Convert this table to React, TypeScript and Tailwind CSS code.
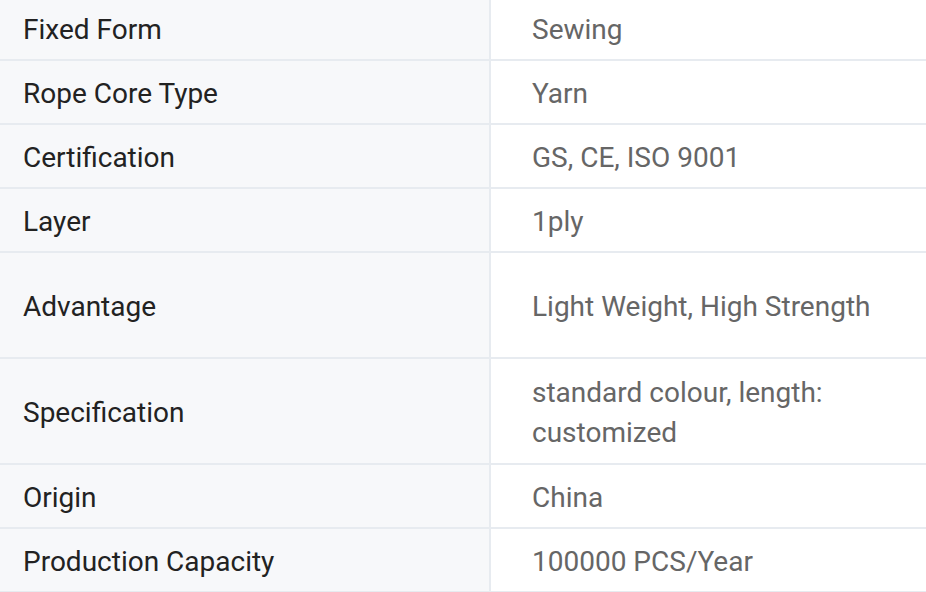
const rows: { label: string; value: string; h: string; pt: string }[] = [
  { label: "Fixed Form", value: "Sewing", h: "h-[61px]", pt: "pt-0" },
  { label: "Rope Core Type", value: "Yarn", h: "h-[64px]", pt: "pt-[4px]" },
  { label: "Certification", value: "GS, CE, ISO 9001", h: "h-[64px]", pt: "pt-[4px]" },
  { label: "Layer", value: "1ply", h: "h-[64px]", pt: "pt-[4px]" },
  { label: "Advantage", value: "Light Weight, High Strength", h: "h-[106px]", pt: "pt-[4px]" },
  { label: "Specification", value: "standard colour, length: customized", h: "h-[106px]", pt: "pt-[4px]" },
  { label: "Origin", value: "China", h: "h-[64px]", pt: "pt-[4px]" },
  { label: "Production Capacity", value: "100000 PCS/Year", h: "h-[64px]", pt: "pt-[4px]" },
];

export default function App() {
  return (
    <div className="w-[926px] h-[592px] overflow-hidden bg-white font-['Roboto',sans-serif]">
      {rows.map((r) => (
        <div
          key={r.label}
          className={`grid grid-cols-[491px_1fr] border-b-2 border-[#e7ebf0] ${r.h}`}
        >
          <div className={`flex items-center bg-[#f7f8fa] border-r-2 border-[#e7ebf0] pl-[23px] ${r.pt} text-[28px] leading-[40px] text-[#222222]`}>
            {r.label}
          </div>
          <div className={`flex items-center pl-[41px] pr-[20px] ${r.pt} text-[28px] leading-[40px] text-[#666666]`}>
            {r.value}
          </div>
        </div>
      ))}
    </div>
  );
}
